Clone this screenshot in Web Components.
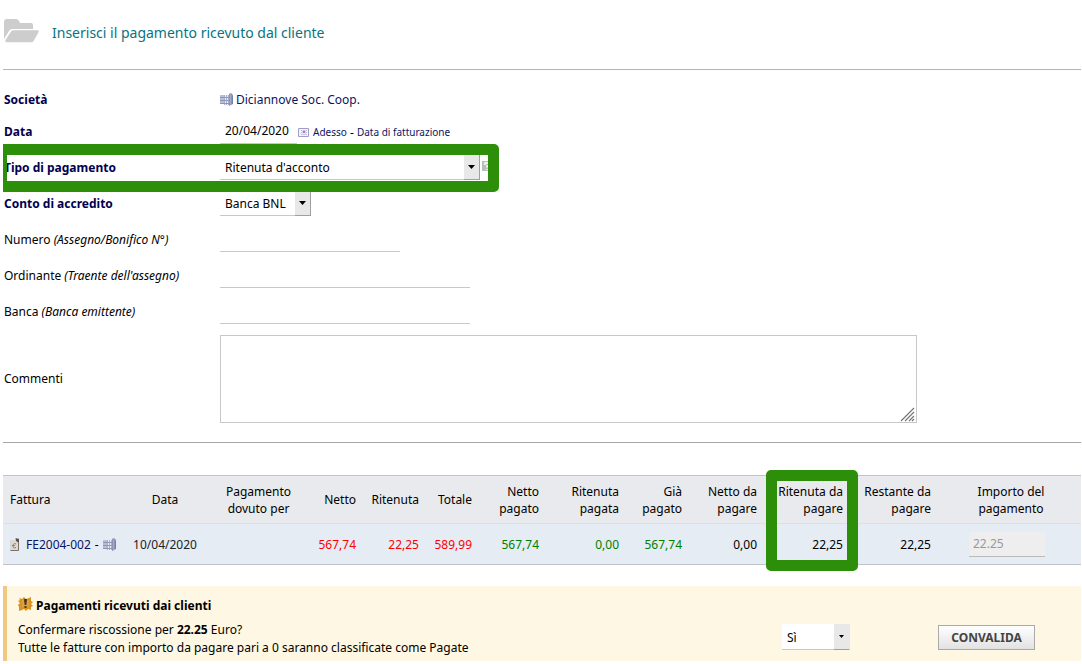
<!DOCTYPE html>
<html lang="it">
<head>
<meta charset="utf-8">
<meta name="viewport" content="width=device-width, initial-scale=1">
<title>Inserisci il pagamento ricevuto dal cliente</title>
<style>
html { background: #fff; }
body {
  margin: 0 1px 0 3px;
  font-family: "Noto Sans", "Open Sans", sans-serif;
  font-size: 12px;
  line-height: 17px;
  color: #000;
  --link: #0a1464;
  --line: #c8c8c8;
  --rule: #b4b4b4;
  --mark: #2d8e0a;
}
</style>
</head>
<body>
<payment-page></payment-page>

<script>
function define(name, html) {
  const template = document.createElement('template');
  template.innerHTML = html;
  customElements.define(name, class extends HTMLElement {
    constructor() {
      super();
      this.attachShadow({ mode: 'open' }).append(template.content.cloneNode(true));
    }
  });
}

define('icon-building', `
<style>:host { display: inline-block; width: 14px; height: 13px; flex: none; } svg { display: block; }</style>
<svg width="14" height="13" viewBox="0 0 14 13" aria-hidden="true">
  <path d="M0 2h5v9H0z" fill="#b9bfd8"/>
  <path d="M0 4.500h5M0 7.500h5M0 10.500h5" stroke="#8c94b6"/>
  <path d="M4 2h5v10.500H4z" fill="#eceef7"/>
  <path d="M4.500 2v10M6.500 2v10M8.500 2v10" stroke="#a9afcb"/>
  <path d="M4 4.500h5M4 7.500h5M4 10.500h5" stroke="#8f97ba"/>
  <path d="M9 1l2-1 2 2v9l-4 2z" fill="#8c93b4"/>
  <path d="M10.500 1.500v10" stroke="#a6acc8"/>
  <path d="M12.500 3v8" stroke="#7980a6"/>
</svg>`);

define('icon-calendar', `
<style>:host { display: inline-block; width: 11px; height: 9px; flex: none; } svg { display: block; }</style>
<svg width="11" height="9" viewBox="0 0 11 9" aria-hidden="true">
  <path d="M.5.5h10v8H.5z" fill="#f5f4fb" stroke="#a29cc8"/>
  <path d="M3 2.500h6M3 4.500h6M3 6.500h6" stroke="#c6bfdc"/>
  <path d="M4.500 2v5M7.500 2v5" stroke="#d9d5ea"/>
  <path d="M5 3h2v2H5z" fill="#b07ab0"/>
</svg>`);

define('icon-invoice', `
<style>:host { display: inline-block; width: 10px; height: 13px; flex: none; } svg { display: block; }</style>
<svg width="10" height="13" viewBox="0 0 10 13" aria-hidden="true">
  <path d="M.5 2h6L9 0v12.500H.5z" fill="#c6c1b8"/>
  <path d="M1 2h5l2 3v7H1z" fill="#dedad2"/>
  <path d="M5.500 0L9 1v4L6 3z" fill="#55524e"/>
  <path d="M8.500 4v8.500H.5" fill="none" stroke="#77716a"/>
  <path d="M6 6c-2-1-3 0-3 1.800s1 2.700 3 1.700M2 7.500h3" fill="none" stroke="#8d806d"/>
</svg>`);

define('page-header', `
<style>
:host { display: flex; align-items: center; gap: 12px; height: 70px; padding-left: 1px; box-sizing: border-box; border-bottom: 1px solid var(--rule); }
svg { display: block; margin-top: -8px; }
h1 { margin: -4px 0 0; font-size: 14px; line-height: 20px; font-weight: 400; color: #087480; }
</style>
<svg width="36" height="24" viewBox="0 0 36 24" aria-hidden="true">
  <path d="M0 20V3Q0 0 3 0h9q2 0 3 2l1 2h11q2 0 2 2v4H8q-2 0-3 2z" fill="#cdcdcd"/>
  <path d="M1.500 21L7 12.500q.8-1.200 2.500-1.200h24q2 0 1 2l-4.800 8.500q-.8 1.500-2.500 1.500H3q-2.200 0-1.500-2.300z" fill="#cdcdcd"/>
</svg>
<h1><slot></slot></h1>`);

define('form-row', `
<style>
:host { display: grid; grid-template-columns: 216px minmax(0, 1fr); align-items: center; min-height: 36px; padding-left: 1px; position: relative; }
:host([compact]) { min-height: 32px; }
:host([tall]) { min-height: 99px; }
:host([marked]) { margin-top: 2px; }
.value { display: flex; align-items: center; }
.mark { display: none; }
:host([marked]) .mark { display: block; position: absolute; z-index: 1; left: -3px; top: -5px; width: 481px; height: 26px; border: 11px solid var(--mark); border-left-width: 7px; border-radius: 0 5px 5px 0; pointer-events: none; }
</style>
<slot name="label"></slot>
<div class="value"><slot></slot></div>
<div class="mark"></div>`);

define('select-box', `
<style>
:host { display: inline-grid; grid-template-columns: minmax(0, 1fr) 16px; height: 26px; box-sizing: border-box; background: linear-gradient(var(--line), var(--line)) bottom / 100% 1px no-repeat #fff; }
::slotted(select) { appearance: none; grid-area: 1 / 1 / 2 / 3; margin: 0; border: 0; border-radius: 0; background: transparent; padding: 0 16px 0 5px; font: inherit; color: #000; min-width: 0; }
.arrow { grid-area: 1 / 2; pointer-events: none; display: grid; place-items: center; background: #e8e8e8; border-right: 1px solid #a0a0a0; border-bottom: 1px solid #a0a0a0; }
svg { display: block; width: 7px; height: 4px; }
:host([small]) svg { width: 5px; height: 3px; }
:host([small]) .arrow { border-right-color: #e8e8e8; }
</style>
<slot></slot>
<span class="arrow"><svg viewBox="0 0 7 4" aria-hidden="true"><path d="M0 0h7L3.500 4z" fill="#000"/></svg></span>`);

define('payment-form', `
<style>
:host { display: block; padding: 13px 0 14px; border-bottom: 1px solid #a6a6a6; }
label, .label { color: #000; }
.strong { font-weight: 700; color: #000050; }
a { color: var(--link); text-decoration: none; }
input, textarea { box-sizing: border-box; margin: 0; border: 0; border-radius: 0; background: #fff; font: inherit; color: #000; outline: 0; }
input { height: 25px; padding: 0 5px; border-bottom: 1px solid var(--line); width: 250px; }
#data { width: 77px; }
#numero { width: 180px; }
.company { display: flex; align-items: center; gap: 2px; }
.quick { display: flex; align-items: center; font-size: 10px; margin-left: 1px; padding-top: 2px; }
.quick icon-calendar { margin-right: 4px; }
.quick span { font-size: 12px; white-space: pre; }
.type { width: 260px; }
.account { width: 91px; }
.help { display: block; margin: -2px 0 0 2px; }
.comment { position: relative; width: 697px; max-width: 100%; }
textarea { display: block; width: 100%; height: 88px; border: 1px solid var(--line); resize: none; padding: 4px; }
.grip { position: absolute; right: 2px; bottom: 1px; }
</style>
<form-row compact><span class="label strong" slot="label">Società</span><a class="company" href="#societa"><icon-building></icon-building>Diciannove Soc. Coop.</a></form-row>
<form-row compact><label class="strong" slot="label" for="data">Data</label><input id="data" value="20/04/2020"><span class="quick"><icon-calendar></icon-calendar><a href="#adesso">Adesso</a><span> - </span><a href="#fatturazione">Data di fatturazione</a></span></form-row>
<form-row marked><label class="strong" slot="label" for="tipo">Tipo di pagamento</label><select-box class="type"><select id="tipo"><option>Ritenuta d'acconto</option></select></select-box><svg class="help" width="10" height="10" viewBox="0 0 10 10" aria-hidden="true"><path d="M0 0h10v10H0z" fill="#b9bfb9"/><path d="M3 4V2h4v3H5v1.500M5 8v1" fill="none" stroke="#fff" stroke-width="1.500"/></svg></form-row>
<form-row><label class="strong" slot="label" for="conto">Conto di accredito</label><select-box class="account"><select id="conto"><option>Banca BNL</option></select></select-box></form-row>
<form-row><label slot="label" for="numero">Numero <i>(Assegno/Bonifico N°)</i></label><input id="numero"></form-row>
<form-row><label slot="label" for="ordinante">Ordinante <i>(Traente dell'assegno)</i></label><input id="ordinante"></form-row>
<form-row><label slot="label" for="banca">Banca <i>(Banca emittente)</i></label><input id="banca"></form-row>
<form-row tall><label slot="label" for="commenti">Commenti</label><div class="comment"><textarea id="commenti"></textarea><svg class="grip" width="15" height="15" viewBox="0 0 15 15" aria-hidden="true"><path d="M1 14L14 1M5 14l9-9M9 14l5-5M12 14l2-2" stroke="#777" stroke-width="1.200"/></svg></div></form-row>`);

define('invoice-table', `
<style>
:host { display: block; margin-top: 32px; }
table { width: 100%; table-layout: fixed; border-collapse: separate; border-spacing: 0; border-top: 1px solid #c4c4c8; border-bottom: 1px solid #bfc2c6; }
th, td { padding: 0 6px; text-align: right; vertical-align: middle; font-weight: 400; box-sizing: border-box; }
th { height: 48px; background: #e9eaed; border-bottom: 1px solid #dedfe2; }
td { height: 40px; background: #e5ecf4; white-space: nowrap; }
.first { text-align: left; padding-left: 7px; }
.mid { text-align: center; }
.red { color: #f00; } .green { color: #008000; } .date { color: #222; }
a { color: var(--link); text-decoration: none; }
.invoice { display: flex; align-items: center; gap: 4px; }
.invoice icon-invoice { margin-right: 2px; }
th.marked { position: relative; }
.mark { position: absolute; z-index: 1; left: 3px; top: -6px; width: 70px; height: 79px; border: 11px solid var(--mark); border-radius: 5px; pointer-events: none; }
th.amount { padding-left: 10px; }
td.amount { padding-right: 10px; }
input { display: block; box-sizing: border-box; width: 76px; height: 25px; margin: 0 auto; padding: 0 4px; border: 0; border-bottom: 1px solid #bbb; border-radius: 0; background: #eee; font: inherit; color: #999; }
</style>
<table>
  <colgroup><col style="width:119px"><col style="width:86px"><col style="width:101px"><col style="width:53px"><col style="width:63px"><col style="width:53px"><col style="width:67px"><col style="width:80px"><col style="width:63px"><col style="width:75px"><col style="width:86px"><col style="width:88px"><col></colgroup>
  <thead><tr>
    <th class="first">Fattura</th><th class="mid">Data</th><th class="mid">Pagamento dovuto per</th>
    <th>Netto</th><th>Ritenuta</th><th>Totale</th><th>Netto pagato</th><th>Ritenuta pagata</th><th>Già<br>pagato</th><th>Netto da pagare</th>
    <th class="marked">Ritenuta da pagare<span class="mark"></span></th><th>Restante da pagare</th><th class="mid amount" id="importo">Importo del<br>pagamento</th>
  </tr></thead>
  <tbody><tr>
    <td class="first"><span class="invoice"><icon-invoice></icon-invoice><a href="#fattura">FE2004-002</a><span>-</span><icon-building></icon-building></span></td>
    <td class="mid date">10/04/2020</td><td></td>
    <td class="red">567,74</td><td class="red">22,25</td><td class="red">589,99</td>
    <td class="green">567,74</td><td class="green">0,00</td><td class="green">567,74</td>
    <td>0,00</td><td>22,25</td><td>22,25</td>
    <td class="amount"><input aria-labelledby="importo" value="22.25" disabled></td>
  </tr></tbody>
</table>`);

define('confirm-box', `
<style>
:host { display: grid; grid-template-columns: minmax(0, 1fr) auto auto; align-items: end; box-sizing: border-box; margin: 21px 0 3px; padding: 11px 46px 4px 11px; border-left: 4px solid #f0c880; background: #fdf7e3; }
h2 { display: flex; align-items: center; gap: 3px; margin: 0 0 7px; font-size: 12px; line-height: 17px; }
h2 svg { margin-top: -4px; }
p { margin: 0; line-height: 18px; }
select-box { width: 68px; margin-bottom: 7px; }
button { box-sizing: border-box; width: 97px; height: 25px; margin: 0 0 7px 88px; padding: 0; border: 1px solid #aaa; border-radius: 0; background: linear-gradient(#fff, #e2e2e2); font: inherit; font-weight: 700; color: #444; }
</style>
<div>
  <h2><svg width="15" height="14" viewBox="0 0 15 14" aria-hidden="true"><path d="M1 1l3 1 2-2 2 2 3-1 2-1v4l2 1-2 2 2 2-2 1v3l-3-1-2 2-2-2-2 1-3 1V10L0 8l2-2L0 4l2-1z" fill="#d8941f"/><path d="M4 3h7v7H4z" fill="#e0a040"/><path d="M6 2h3v1.500L8.300 8H6.700L6 3.500zM6.500 9h2v2h-2z" fill="#4a3a22"/></svg>Pagamenti ricevuti dai clienti</h2>
  <p><label for="conferma">Confermare riscossione per <b>22.25</b> Euro?</label></p>
  <p>Tutte le fatture con importo da pagare pari a 0 saranno classificate come Pagate</p>
</div>
<select-box small><select id="conferma"><option>Sì</option></select></select-box>
<button type="button">CONVALIDA</button>`);

define('payment-page', `
<style>:host { display: block; }</style>
<page-header>Inserisci il pagamento ricevuto dal cliente</page-header>
<payment-form></payment-form>
<invoice-table></invoice-table>
<confirm-box></confirm-box>`);
</script>
</body>
</html>
